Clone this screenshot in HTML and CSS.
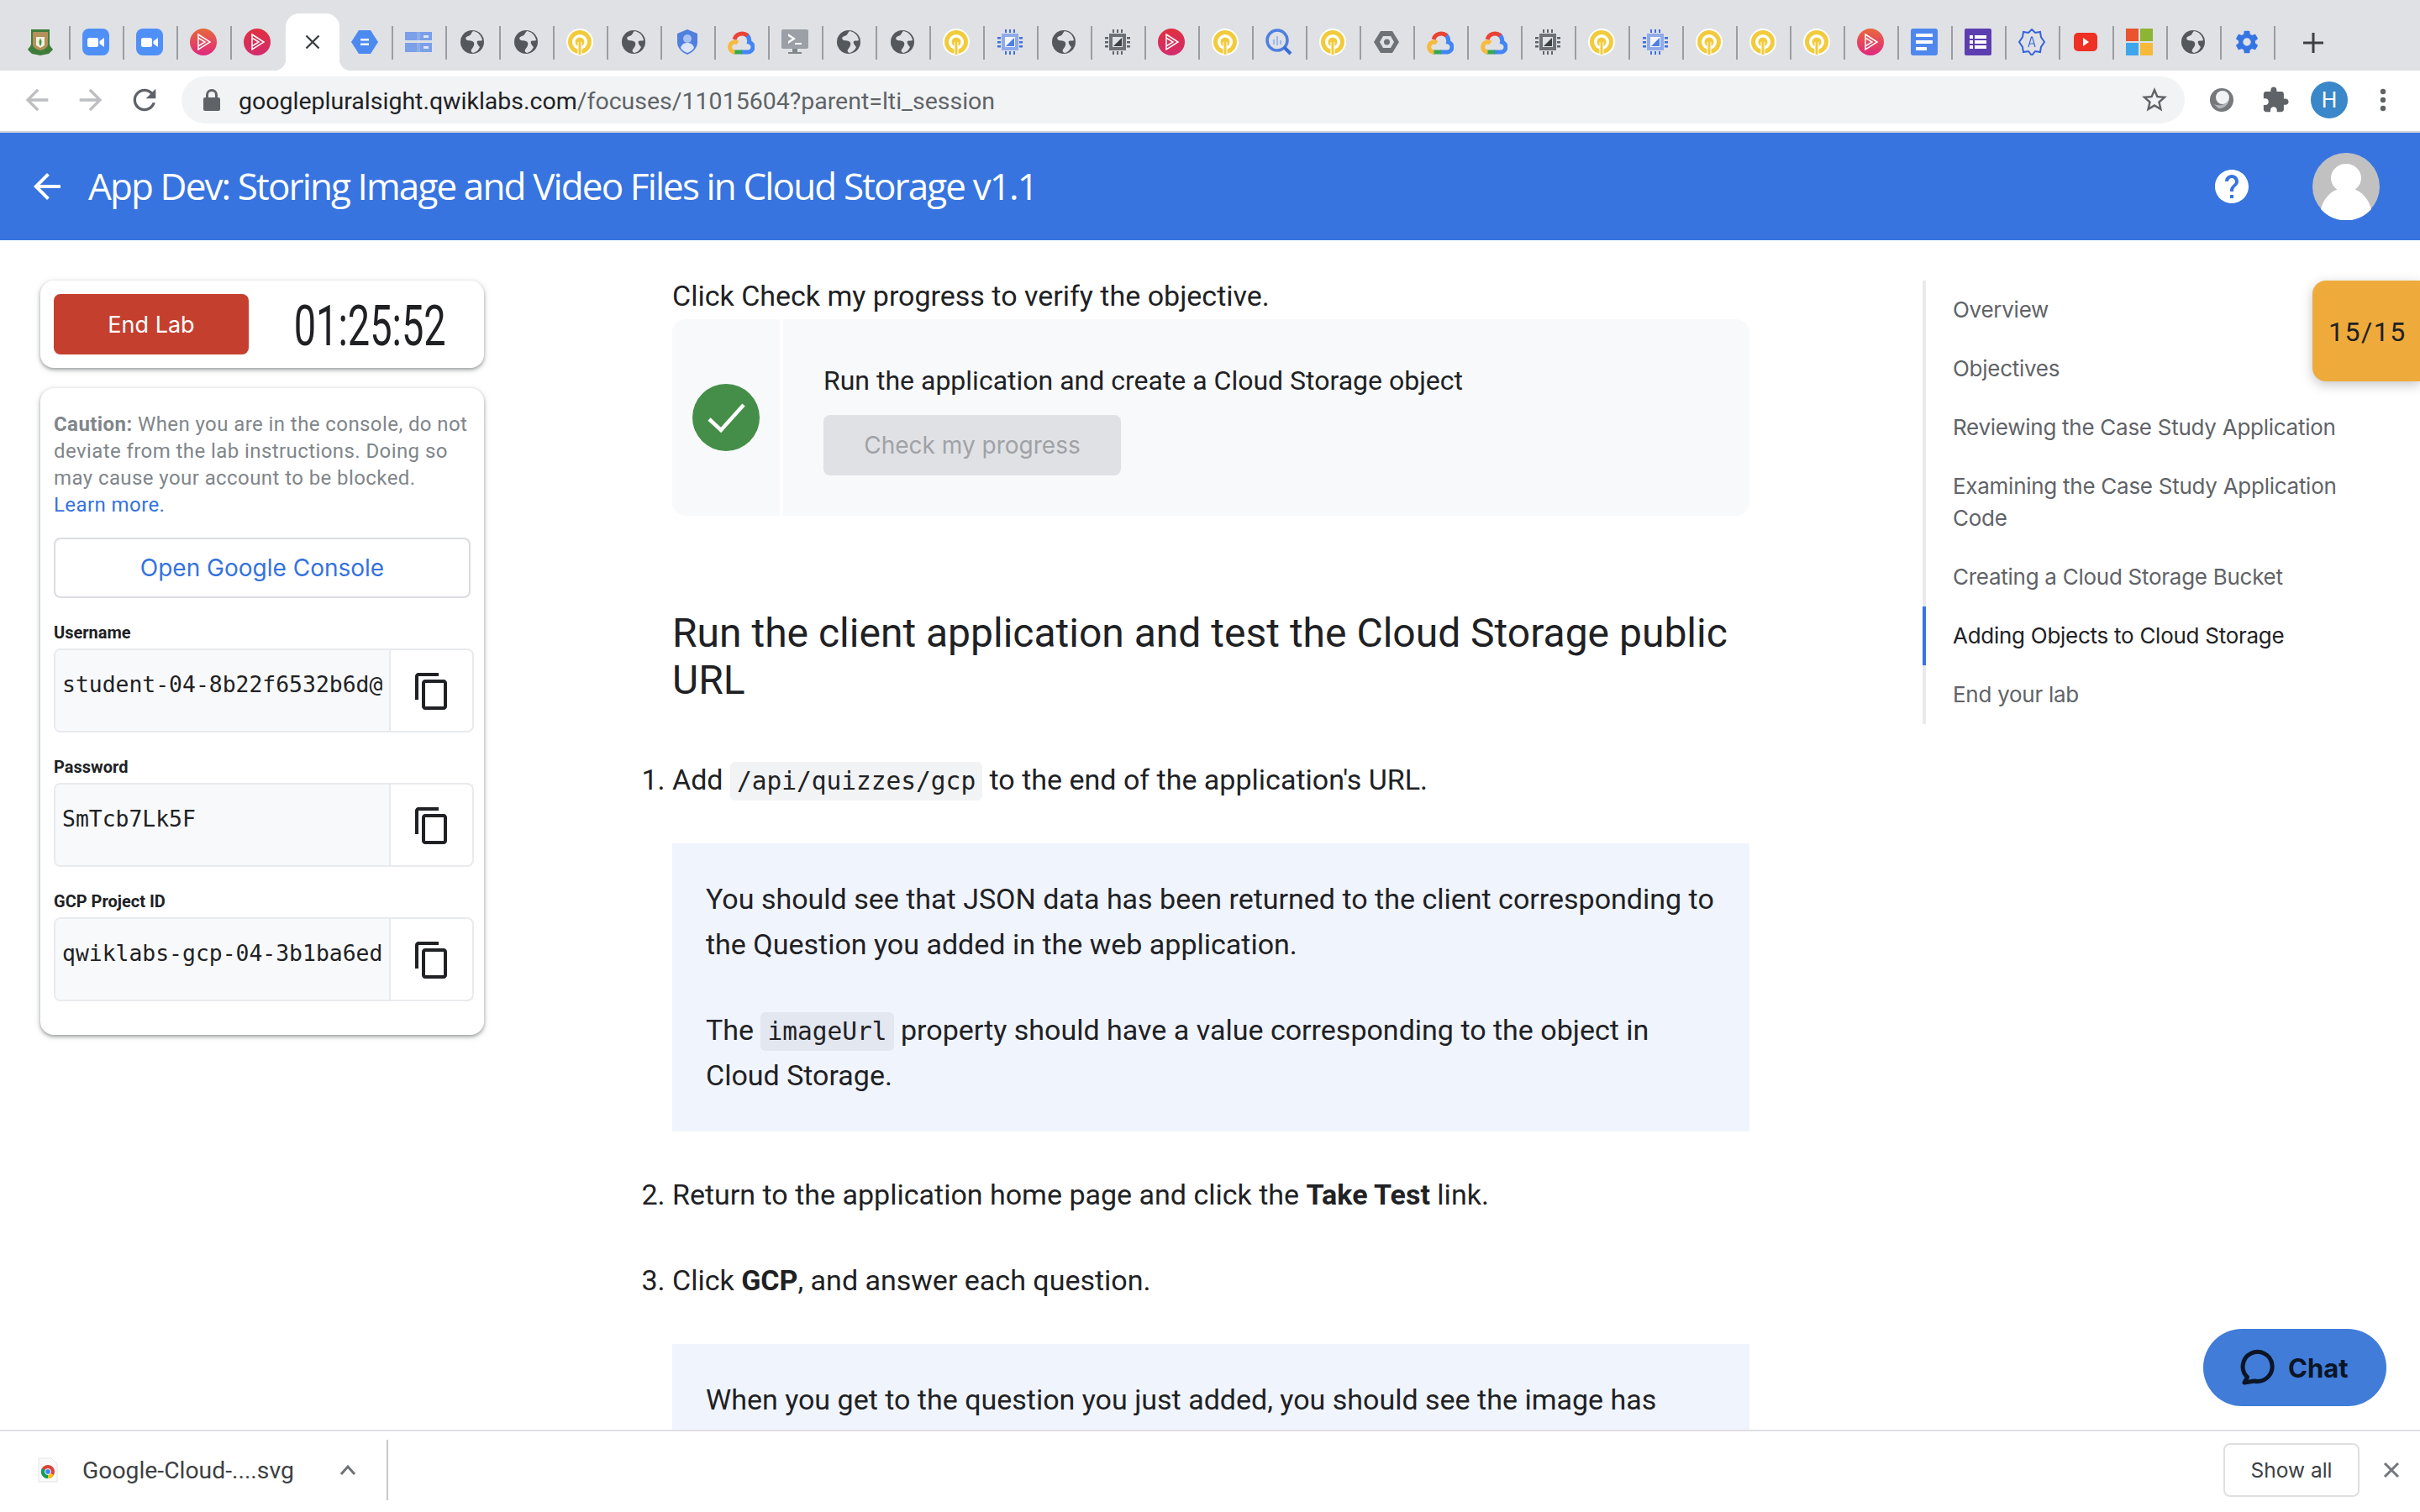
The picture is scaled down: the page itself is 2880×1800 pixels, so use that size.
FILE: index.html
```html
<!DOCTYPE html>
<html lang="en">

<head>
    <meta charset="UTF-8">
    <title>App Dev: Storing Image and Video Files in Cloud Storage v1.1</title>
    <link rel="stylesheet" href="styles.css">
</head>

<body>
    <svg class="sprites" width="0" height="0">
        <defs>
            <linearGradient id="psGrad" x1="0" y1="0" x2="0" y2="1">
                <stop offset="0" stop-color="#e8683a" />
                <stop offset="1" stop-color="#e0287f" />
            </linearGradient>
            <linearGradient id="psRed" x1="0" y1="0" x2="0" y2="1">
                <stop offset="0" stop-color="#e0303f" />
                <stop offset="1" stop-color="#d32c6e" />
            </linearGradient>
        </defs>
        <symbol id="crest" viewBox="0 0 32 32">
            <path d="M5 1h22v17c0 3 3 5 4 7l-5 5-10 2-10-2-5-5c1-2 4-4 4-7z" fill="#3d7d3a" />
            <path d="M7 4h18v15c0 3-4 6-9 7-5-1-9-4-9-7z" fill="#b3915a" />
            <path d="M11 10h10v10l-5 3-5-3z" fill="#f3efe0" />
            <path d="M16 12c2 2 2 6 0 9-2-3-2-7 0-9z" fill="#3f9a45" />
        </symbol>
        <symbol id="zoom" viewBox="0 0 32 32">
            <rect width="32" height="32" rx="8" fill="#4f90f8" />
            <rect x="6" y="11" width="13" height="11" rx="2.5" fill="#fff" />
            <path d="M20.5 15l5.5-4v11l-5.500-4z" fill="#fff" />
        </symbol>
        <symbol id="ps" viewBox="0 0 32 32">
            <circle cx="16" cy="16" r="16" fill="url(#psGrad)" />
            <path d="M10 7l14 9-14 9zM10 11v10l8-5z" fill="none" stroke="#fff" stroke-width="1.500" />
        </symbol>
        <symbol id="psred" viewBox="0 0 32 32">
            <circle cx="16" cy="16" r="16" fill="url(#psRed)" />
            <path d="M10 7l14 9-14 9zM10 11v10l8-5z" fill="none" stroke="#fff" stroke-width="1.500" />
        </symbol>
        <symbol id="hexblue" viewBox="0 0 32 32">
            <path d="M9 2h14l9 14-9 14H9L0 16z" fill="#4d8af0" />
            <path d="M11 12h10v2.500H11zM11 17.500h10V20H11z" fill="#fff" />
        </symbol>
        <symbol id="storage" viewBox="0 0 32 32">
            <path d="M0 4h14v10H0zM18 4h14v10H18zM0 17h14v11H0zM18 17h14v11H18z" fill="#7b9fe8" />
            <path d="M14 4h4v10h-4zM14 17h4v11h-4z" fill="#8fade9" />
            <path d="M22 8h6v3h-6zM22 21h6v3h-6z" fill="#dfe6f8" />
        </symbol>
        <symbol id="globe" viewBox="0 0 32 32">
            <circle cx="16" cy="16" r="14" fill="#54575c" />
            <path d="M17 3c-3 3-2 5-6 6-3 1-4 3-1 5 4 1 7 0 8 3 1 3-1 5-3 8-1 2 0 3 2 4 4-1 6-3 8-7-2-2-4-5-3-7 2-1 4 0 6-1-1-6-5-10-11-11z" fill="#dfe1e5" />
        </symbol>
        <symbol id="qwik" viewBox="0 0 32 32">
            <circle cx="16" cy="16" r="16" fill="#fff" />
            <circle cx="16" cy="16" r="14" fill="#f2cb3d" />
            <circle cx="16" cy="16" r="9" fill="#fff" />
            <circle cx="16" cy="16" r="5.500" fill="#f2cb3d" />
            <path d="M13.500 16h5v14h-5z" fill="#fff" />
            <path d="M14.500 16h3v15h-3z" fill="#f2cb3d" />
        </symbol>
        <symbol id="shield" viewBox="0 0 32 32">
            <path d="M16 1l12 5v10c0 7-5 12-12 15C9 28 4 23 4 16V6z" fill="#4f7fdf" />
            <circle cx="16" cy="12" r="5" fill="#a9c1f2" />
            <path d="M8 23c1-4 4-6 8-6s7 2 8 6c-2 3-5 5-8 6-3-1-6-3-8-6z" fill="#dbe4f8" />
        </symbol>
        <symbol id="gcloud" viewBox="0 0 32 32">
            <g fill="none" stroke-width="5">
                <path d="M16 28h8.500a6 6 0 0 0 1-11.800A9.500 9.500 0 0 0 22 7" stroke="#4285f4" />
                <path d="M23.500 8.500A9.500 9.500 0 0 0 8 13" stroke="#ea4335" />
                <path d="M7 28h10" stroke="#34a853" />
                <path d="M8.500 28A6 6 0 1 1 12 17" stroke="#f6bb3c" />
            </g>
        </symbol>
        <symbol id="console" viewBox="0 0 32 32">
            <rect y="1" width="32" height="23" rx="2" fill="#9aa0a6" />
            <path d="M8 6l9 6-9 6v-3l5-3-5-3zM16 17h8v2h-8z" fill="#fff" />
            <path d="M13 24h6v4h5v2H8v-2h5z" fill="#80868b" />
        </symbol>
        <symbol id="chipblue" viewBox="0 0 32 32">
            <path d="M10 1h2v4h-2zM15 1h2v4h-2zM20 1h2v4h-2zM10 27h2v4h-2zM15 27h2v4h-2zM20 27h2v4h-2zM1 10h4v2.500H1zM1 15h4v2.500H1zM1 20h4v2.500H1zM27 10h4v2.500h-4zM27 15h4v2.500h-4zM27 20h4v2.500h-4z" fill="#3f6fdd" />
            <rect x="6" y="6" width="20" height="20" fill="#8fabea" />
            <rect x="10" y="10" width="12" height="12" fill="#f2f5fc" />
            <path d="M11 21l10-10v10z" fill="#4f7fdf" />
        </symbol>
        <symbol id="chipgray" viewBox="0 0 32 32">
            <path d="M10 1h2v4h-2zM15 1h2v4h-2zM20 1h2v4h-2zM10 27h2v4h-2zM15 27h2v4h-2zM20 27h2v4h-2zM1 10h4v2.500H1zM1 15h4v2.500H1zM1 20h4v2.500H1zM27 10h4v2.500h-4zM27 15h4v2.500h-4zM27 20h4v2.500h-4z" fill="#5f6368" />
            <rect x="6" y="6" width="20" height="20" fill="#6e7277" />
            <rect x="10" y="10" width="12" height="12" fill="#dfe1e5" />
            <path d="M11 21l10-10v10z" fill="#3c4043" />
        </symbol>
        <symbol id="bq" viewBox="0 0 32 32">
            <circle cx="14" cy="14" r="12" fill="none" stroke="#4f7fdf" stroke-width="3.500" />
            <path d="M22 22l8 8" stroke="#3d6cd4" stroke-width="4" />
            <path d="M9 13h2v6H9zM13 9h2v11h-2zM17 14h2v5h-2z" fill="#9db6ec" />
        </symbol>
        <symbol id="hexgray" viewBox="0 0 32 32">
            <path d="M9 3h14l8 13-8 13H9L1 16z" fill="#6e7277" />
            <path d="M12 9l9 0 4 7-4 7H12l-4-7z" fill="#dfe1e5" />
            <circle cx="16.500" cy="16" r="3.500" fill="#6e7277" />
        </symbol>
        <symbol id="docs" viewBox="0 0 32 32">
            <rect width="32" height="32" rx="3" fill="#4f87ee" />
            <path d="M6 6h20v4H6zM6 14h20v4H6zM6 22h13v4H6z" fill="#fff" />
        </symbol>
        <symbol id="forms" viewBox="0 0 32 32">
            <rect width="32" height="32" rx="2" fill="#5c3eb0" />
            <path d="M6 8h4v4H6zM12 8h14v4H12zM6 14h4v4H6zM12 14h14v4H12zM6 20h4v4H6zM12 20h14v4H12z" fill="#fff" />
        </symbol>
        <symbol id="abadge" viewBox="0 0 32 32">
            <path d="M16 1l4 4 6-1 1 6 4 6-4 6-1 6-6-1-4 5-4-5-6 1-1-6-4-6 4-6 1-6 6 1z" fill="none" stroke="#3563dc" stroke-width="2" />
            <path d="M12 22l3.500-12h1L20 22m-6.500-4h5" fill="none" stroke="#3563dc" stroke-width="1.200" />
        </symbol>
        <symbol id="yt" viewBox="0 0 32 32">
            <rect x="2" y="5" width="28" height="22" rx="5" fill="#ee3124" />
            <path d="M13 11l7 5-7 5z" fill="#fff" />
        </symbol>
        <symbol id="ms" viewBox="0 0 32 32">
            <path d="M0 0h15v15H0z" fill="#e8552f" />
            <path d="M17 0h15v15H17z" fill="#8db534" />
            <path d="M0 17h15v15H0z" fill="#3fa6ec" />
            <path d="M17 17h15v15H17z" fill="#f6b93a" />
        </symbol>
        <symbol id="gear" viewBox="0 0 24 24">
            <path d="M19.400 13c.04-.32.07-.66.07-1s-.03-.68-.07-1l2.110-1.650c.19-.15.24-.42.12-.64l-2-3.460c-.12-.22-.39-.3-.61-.22l-2.490 1c-.52-.4-1.080-.73-1.690-.98l-.38-2.650A.49.49 0 0 0 14 2h-4c-.25 0-.46.18-.49.420l-.38 2.650c-.61.25-1.170.59-1.690.98l-2.490-1c-.23-.09-.49 0-.61.220l-2 3.460c-.13.220-.07.490.12.640L4.570 11c-.04.320-.07.670-.07 1s.03.680.07 1l-2.110 1.650c-.19.150-.24.420-.12.640l2 3.460c.12.220.39.300.61.220l2.490-1c.52.400 1.080.730 1.690.980l.38 2.650c.03.240.24.420.49.420h4c.25 0 .46-.18.49-.42l.38-2.650c.61-.25 1.170-.59 1.690-.98l2.490 1c.23.090.49 0 .61-.22l2-3.460c.12-.22.070-.49-.12-.64L19.400 13zM12 15.500a3.500 3.500 0 1 1 0-7 3.500 3.500 0 0 1 0 7z" fill="#3574e3" />
        </symbol>
        <symbol id="copy" viewBox="0 0 24 24">
            <path d="M16 1H4c-1.100 0-2 .9-2 2v14h2V3h12V1zm3 4H8c-1.100 0-2 .9-2 2v14c0 1.100.9 2 2 2h11c1.100 0 2-.9 2-2V7c0-1.100-.9-2-2-2zm0 16H8V7h11v14z" />
        </symbol>
        <symbol id="arrow" viewBox="0 0 24 24">
            <path d="M20 11H7.830l5.590-5.590L12 4l-8 8 8 8 1.410-1.410L7.830 13H20v-2z" />
        </symbol>
    </svg>

    <div class="tabs">
        <div class="tab"><svg class="fav"><use href="#crest" /></svg></div>
        <div class="tab"><svg class="fav"><use href="#zoom" /></svg></div>
        <div class="tab"><svg class="fav"><use href="#zoom" /></svg></div>
        <div class="tab"><svg class="fav"><use href="#ps" /></svg></div>
        <div class="tab tab-before"><svg class="fav"><use href="#psred" /></svg></div>
        <div class="tab tab-active">
            <svg width="18" height="18" viewBox="0 0 18 18"><path d="M1.500 1.500l15 15M16.500 1.500l-15 15" stroke="#3c4043" stroke-width="2.400" /></svg>
        </div>
        <div class="tab"><svg class="fav"><use href="#hexblue" /></svg></div>
        <div class="tab"><svg class="fav"><use href="#storage" /></svg></div>
        <div class="tab"><svg class="fav"><use href="#globe" /></svg></div>
        <div class="tab"><svg class="fav"><use href="#globe" /></svg></div>
        <div class="tab"><svg class="fav"><use href="#qwik" /></svg></div>
        <div class="tab"><svg class="fav"><use href="#globe" /></svg></div>
        <div class="tab"><svg class="fav"><use href="#shield" /></svg></div>
        <div class="tab"><svg class="fav"><use href="#gcloud" /></svg></div>
        <div class="tab"><svg class="fav"><use href="#console" /></svg></div>
        <div class="tab"><svg class="fav"><use href="#globe" /></svg></div>
        <div class="tab"><svg class="fav"><use href="#globe" /></svg></div>
        <div class="tab"><svg class="fav"><use href="#qwik" /></svg></div>
        <div class="tab"><svg class="fav"><use href="#chipblue" /></svg></div>
        <div class="tab"><svg class="fav"><use href="#globe" /></svg></div>
        <div class="tab"><svg class="fav"><use href="#chipgray" /></svg></div>
        <div class="tab"><svg class="fav"><use href="#psred" /></svg></div>
        <div class="tab"><svg class="fav"><use href="#qwik" /></svg></div>
        <div class="tab"><svg class="fav"><use href="#bq" /></svg></div>
        <div class="tab"><svg class="fav"><use href="#qwik" /></svg></div>
        <div class="tab"><svg class="fav"><use href="#hexgray" /></svg></div>
        <div class="tab"><svg class="fav"><use href="#gcloud" /></svg></div>
        <div class="tab"><svg class="fav"><use href="#gcloud" /></svg></div>
        <div class="tab"><svg class="fav"><use href="#chipgray" /></svg></div>
        <div class="tab"><svg class="fav"><use href="#qwik" /></svg></div>
        <div class="tab"><svg class="fav"><use href="#chipblue" /></svg></div>
        <div class="tab"><svg class="fav"><use href="#qwik" /></svg></div>
        <div class="tab"><svg class="fav"><use href="#qwik" /></svg></div>
        <div class="tab"><svg class="fav"><use href="#qwik" /></svg></div>
        <div class="tab"><svg class="fav"><use href="#ps" /></svg></div>
        <div class="tab"><svg class="fav"><use href="#docs" /></svg></div>
        <div class="tab"><svg class="fav"><use href="#forms" /></svg></div>
        <div class="tab"><svg class="fav"><use href="#abadge" /></svg></div>
        <div class="tab"><svg class="fav"><use href="#yt" /></svg></div>
        <div class="tab"><svg class="fav"><use href="#ms" /></svg></div>
        <div class="tab"><svg class="fav"><use href="#globe" /></svg></div>
        <div class="tab"><svg class="fav"><use href="#gear" /></svg></div>
        <div class="tab-new">
            <svg width="28" height="28" viewBox="0 0 28 28"><path d="M12.500 2h3v10.500H26v3H15.500V26h-3V15.500H2v-3h10.500z" /></svg>
        </div>
    </div>

    <div class="toolbar">
        <div class="tool tool-off"><svg class="icon-40"><use href="#arrow" /></svg></div>
        <div class="tool tool-off tool-flip"><svg class="icon-40"><use href="#arrow" /></svg></div>
        <div class="tool">
            <svg width="40" height="40" viewBox="0 0 24 24"><path d="M17.650 6.350C16.200 4.900 14.210 4 12 4c-4.420 0-7.990 3.580-7.990 8s3.570 8 7.990 8c3.730 0 6.840-2.550 7.730-6h-2.080c-.82 2.330-3.040 4-5.650 4-3.310 0-6-2.690-6-6s2.690-6 6-6c1.660 0 3.140.69 4.220 1.780L13 11h7V4l-2.350 2.350z" /></svg>
        </div>
        <div class="omnibox">
            <svg class="lock" width="20" height="26" viewBox="0 0 20 26"><path d="M3 10V7a7 7 0 0 1 14 0v3h1a2 2 0 0 1 2 2v12a2 2 0 0 1-2 2H2a2 2 0 0 1-2-2V12a2 2 0 0 1 2-2zm3 0h8V7a4 4 0 0 0-8 0z" /></svg>
            <span class="url"><span class="url-host">googlepluralsight.qwiklabs.com</span>/focuses/11015604?parent=lti_session</span>
            <svg class="star" width="36" height="36" viewBox="0 0 24 24"><path d="M22 9.240l-7.190-.62L12 2 9.190 8.630 2 9.240l5.460 4.730L5.820 21 12 17.270 18.180 21l-1.630-7.030L22 9.240zM12 15.400l-3.760 2.270 1-4.280-3.320-2.880 4.380-.38L12 6.100l1.710 4.040 4.380.38-3.320 2.880 1 4.280L12 15.400z" /></svg>
        </div>
        <div class="toolbar-right">
            <div class="tool">
                <svg width="32" height="32" viewBox="0 0 32 32"><circle cx="16" cy="16" r="14" fill="#76787c" /><circle cx="17" cy="13" r="8" fill="#f1f3f4" /><path d="M7 21c6 3 14 1 18-6-1 7-7 12-13 11z" fill="#b4b6b9" /></svg>
            </div>
            <div class="tool">
                <svg width="34" height="34" viewBox="0 0 24 24"><path d="M20.500 11H19V7c0-1.100-.9-2-2-2h-4V3.500C13 2.120 11.880 1 10.500 1S8 2.120 8 3.500V5H4c-1.100 0-1.990.9-1.990 2v3.800H3.500c1.490 0 2.700 1.210 2.700 2.700s-1.210 2.700-2.700 2.700H2V20c0 1.100.9 2 2 2h3.800v-1.500c0-1.490 1.210-2.700 2.700-2.700 1.490 0 2.700 1.210 2.700 2.700V22H17c1.100 0 2-.9 2-2v-4h1.500c1.380 0 2.500-1.120 2.500-2.500S21.880 11 20.500 11z" /></svg>
            </div>
            <div class="tool"><span class="profile">H</span></div>
            <div class="tool">
                <svg width="8" height="32" viewBox="0 0 8 32"><circle cx="4" cy="6" r="3.200" /><circle cx="4" cy="16" r="3.200" /><circle cx="4" cy="26" r="3.200" /></svg>
            </div>
        </div>
    </div>

    <header class="lab-header">
        <svg class="header-back"><use href="#arrow" /></svg>
        <h1 class="lab-title">App Dev: Storing Image and Video Files in Cloud Storage v1.1</h1>
        <svg class="header-help" width="48" height="48" viewBox="0 0 24 24"><path d="M12 2C6.480 2 2 6.480 2 12s4.480 10 10 10 10-4.480 10-10S17.520 2 12 2zm1 17h-2v-2h2v2zm2.070-7.750l-.9.920C13.450 12.900 13 13.500 13 15h-2v-.5c0-1.100.45-2.100 1.170-2.830l1.240-1.260c.37-.36.59-.86.59-1.410 0-1.100-.9-2-2-2s-2 .9-2 2H8c0-2.210 1.790-4 4-4s4 1.790 4 4c0 .88-.36 1.680-.93 2.250z" /></svg>
        <svg class="header-user" width="80" height="80" viewBox="0 0 80 80">
            <circle cx="40" cy="40" r="40" fill="#c1c1c1" />
            <ellipse cx="40" cy="30" rx="18" ry="17" fill="#fff" />
            <path d="M10 67c3-12 11-21 21-24 5 3 13 3 18 0 10 3 18 12 21 24a40 40 0 0 1-60 0z" fill="#fff" />
        </svg>
    </header>

    <div class="workspace">
        <aside class="side">
            <div class="card card-timer">
                <button class="btn-end">End Lab</button>
                <div class="timer"><span class="timer-digits">01:25:52</span></div>
            </div>

            <div class="card card-creds">
                <p class="caution"><b>Caution:</b> When you are in the console, do not deviate from the lab instructions. Doing so may cause your account to be blocked. <a href="#">Learn more.</a></p>
                <button class="btn-console">Open Google Console</button>

                <label class="field-label">Username</label>
                <div class="field">
                    <div class="field-value">student-04-8b22f6532b6d@</div>
                    <div class="field-copy"><svg class="icon-copy"><use href="#copy" /></svg></div>
                </div>

                <label class="field-label">Password</label>
                <div class="field">
                    <div class="field-value">SmTcb7Lk5F</div>
                    <div class="field-copy"><svg class="icon-copy"><use href="#copy" /></svg></div>
                </div>

                <label class="field-label">GCP Project ID</label>
                <div class="field">
                    <div class="field-value">qwiklabs-gcp-04-3b1ba6ed</div>
                    <div class="field-copy"><svg class="icon-copy"><use href="#copy" /></svg></div>
                </div>
            </div>
        </aside>

        <main class="content">
            <p class="intro">Click Check my progress to verify the objective.</p>

            <div class="progress">
                <div class="progress-mark">
                    <svg width="80" height="80" viewBox="0 0 80 80"><circle cx="40" cy="40" r="40" fill="#458e49" /><path d="M20 42l14 13 27-30" fill="none" stroke="#fff" stroke-width="4.500" /></svg>
                </div>
                <div class="progress-body">
                    <p>Run the application and create a Cloud Storage object</p>
                    <button class="btn-check">Check my progress</button>
                </div>
            </div>

            <h2>Run the client application and test the Cloud Storage public URL</h2>

            <ol class="steps">
                <li>
                    Add <code>/api/quizzes/gcp</code> to the end of the application's URL.
                    <div class="note">
                        <p>You should see that JSON data has been returned to the client corresponding to the Question you added in the web application.</p>
                        <p>The <code>imageUrl</code> property should have a value corresponding to the object in Cloud Storage.</p>
                    </div>
                </li>
                <li>Return to the application home page and click the <b>Take Test</b> link.</li>
                <li>
                    Click <b>GCP</b>, and answer each question.
                    <div class="note">
                        <p>When you get to the question you just added, you should see the image has</p>
                    </div>
                </li>
            </ol>
        </main>

        <nav class="toc">
            <a href="#">Overview</a>
            <a href="#">Objectives</a>
            <a href="#">Reviewing the Case Study Application</a>
            <a href="#">Examining the Case Study Application Code</a>
            <a href="#">Creating a Cloud Storage Bucket</a>
            <a href="#" class="toc-active">Adding Objects to Cloud Storage</a>
            <a href="#">End your lab</a>
        </nav>

        <div class="score">15/15</div>

        <button class="chat">
            <svg width="42" height="44" viewBox="0 0 42 44"><path d="M5 40l3.500-6.500A17.500 17.500 0 1 1 17 38z" fill="none" stroke="#0b1526" stroke-width="5" stroke-linejoin="round" /></svg>
            Chat
        </button>
    </div>

    <footer class="downloads">
        <div class="download-item">
            <svg width="24" height="30" viewBox="0 0 24 30">
                <path d="M1 1h15l7 7v21H1z" fill="#fafafa" stroke="#e4e4e4" />
                <circle cx="12" cy="17" r="8" fill="#db4437" />
                <path d="M12 17l7 4a8 8 0 0 1-7 4z" fill="#f4c20d" />
                <path d="M12 17v8a8 8 0 0 1-7-12z" fill="#0f9d58" />
                <circle cx="12" cy="17" r="3.500" fill="#4285f4" stroke="#fff" />
            </svg>
            <span class="download-name">Google-Cloud-....svg</span>
            <svg class="download-caret" width="20" height="14" viewBox="0 0 20 14"><path d="M2 12l8-9 8 9" fill="none" stroke="#6f7276" stroke-width="3" /></svg>
        </div>
        <button class="btn-showall">Show all</button>
        <svg class="download-close" width="20" height="20" viewBox="0 0 20 20"><path d="M2 2l16 16M18 2L2 18" stroke="#73777b" stroke-width="3" /></svg>
    </footer>
</body>

</html>
```

FILE: styles.css
```css
* {
    box-sizing: border-box;
}

html,
body {
    margin: 0;
    height: 100%;
}

body {
    display: flex;
    flex-direction: column;
    height: 1800px;
    overflow: hidden;
    font-family: Roboto, sans-serif;
    color: #202124;
    background-color: #fff;
}

button {
    font-family: inherit;
    cursor: pointer;
}

.sprites {
    position: absolute;
}

/* browser tabs */
.tabs {
    display: flex;
    height: 84px;
    flex-shrink: 0;
    padding: 31px 0 13px 20px;
    background-color: #dfe1e5;
}

.tab {
    display: flex;
    justify-content: center;
    align-items: center;
    width: 64px;
    height: 40px;
    padding-right: 2px;
    border-right: 2px solid #9a9da1;
}

.tab:first-child .fav {
    margin-right: 4px;
}

.tab-before {
    border-right-color: transparent;
}

.tab-active {
    position: relative;
    height: 68px;
    margin-top: -15px;
    border-right: none;
    padding-right: 0;
    background-color: #fff;
    border-radius: 16px 16px 0 0;
}

.tab-active::before,
.tab-active::after {
    content: "";
    position: absolute;
    bottom: 0;
    width: 14px;
    height: 14px;
}

.tab-active::before {
    left: -14px;
    background: radial-gradient(circle at 0 0, #dfe1e5 14px, #fff 14.500px);
}

.tab-active::after {
    right: -14px;
    background: radial-gradient(circle at 100% 0, #dfe1e5 14px, #fff 14.500px);
}

.fav {
    width: 32px;
    height: 32px;
    margin-bottom: 2px;
}

.tab-new {
    display: flex;
    justify-content: center;
    align-items: center;
    width: 90px;
    height: 40px;
}

.tab-new svg {
    fill: #3c4043;
}

/* address bar */
.toolbar {
    display: flex;
    align-items: center;
    height: 74px;
    flex-shrink: 0;
    padding: 0 12px 2px;
    background-color: #fff;
    border-bottom: 2px solid #d5d7dc;
}

.tool {
    display: flex;
    justify-content: center;
    align-items: center;
    width: 64px;
    fill: #5f6368;
}

.tool-off {
    fill: #bcbec1;
}

.tool-flip svg {
    transform: scaleX(-1);
}

.icon-40 {
    width: 40px;
    height: 40px;
}

.omnibox {
    display: flex;
    align-items: center;
    flex: 1;
    height: 56px;
    margin: 0 12px;
    padding: 0 18px 0 26px;
    background-color: #f1f3f4;
    border-radius: 28px;
}

.lock {
    fill: #5f6368;
    margin-right: 22px;
}

.url {
    flex: 1;
    padding-top: 2px;
    font-family: Roboto, sans-serif;
    font-size: 28.500px;
    color: #5f6368;
}

.url-host {
    color: #202124;
}

.star {
    fill: #5f6368;
}

.toolbar-right {
    display: flex;
    align-items: center;
}

.profile {
    display: flex;
    justify-content: center;
    align-items: center;
    width: 44px;
    height: 44px;
    border-radius: 50%;
    background-color: #3a87c9;
    color: #fff;
    font-size: 26px;
}

/* blue lab header */
.lab-header {
    display: flex;
    align-items: center;
    height: 128px;
    flex-shrink: 0;
    padding: 0 48px 0 32px;
    background-color: #3774e0;
    color: #fff;
}

.header-back {
    width: 48px;
    height: 48px;
    fill: #fff;
}

.lab-title {
    flex: 1;
    margin: 0 0 2px 25px;
    font-family: "Open Sans", sans-serif;
    font-size: 44px;
    font-weight: 400;
    letter-spacing: -1.870px;
}

.header-help {
    fill: #fff;
    margin-right: 72px;
}

/* page body */
.workspace {
    position: relative;
    display: flex;
    flex: 1;
    min-height: 0;
    overflow: hidden;
    padding: 48px 0 0 48px;
}

.side {
    width: 528px;
    flex-shrink: 0;
}

.card {
    background-color: #fff;
    border-radius: 16px;
    box-shadow: 0 2px 4px rgba(60, 64, 67, 0.45), 0 2px 8px rgba(60, 64, 67, 0.15);
}

.card-timer {
    display: flex;
    align-items: center;
    height: 104px;
    padding: 0 16px;
}

.btn-end {
    width: 232px;
    height: 72px;
    flex-shrink: 0;
    border: none;
    border-radius: 8px;
    background-color: #c53f2f;
    color: #fff;
    font-family: Inter, sans-serif;
    font-size: 27px;
}

.timer {
    flex: 1;
    min-width: 0;
    display: flex;
    justify-content: center;
}

.timer-digits {
    display: block;
    flex-shrink: 0;
    padding-top: 4px;
    margin-left: 24px;
    font-size: 67px;
    line-height: 72px;
    transform: scaleX(0.7);
}

.card-creds {
    height: 770px;
    margin-top: 24px;
    padding: 27px 12px 0 16px;
}

.caution {
    margin: 0 0 23px;
    width: 496px;
    font-size: 24px;
    line-height: 32px;
    letter-spacing: 0.420px;
    color: #80868b;
}

.caution a {
    color: #3572de;
    text-decoration: none;
}

.btn-console {
    display: block;
    width: 496px;
    height: 72px;
    margin-bottom: 27px;
    background-color: #fff;
    border: 2px solid #dadce0;
    border-radius: 8px;
    color: #3572de;
    font-family: Inter, sans-serif;
    font-size: 28px;
}

.field-label {
    display: block;
    height: 33px;
    font-size: 20px;
    line-height: 28px;
    font-weight: 700;
    color: #202124;
}

.field {
    display: flex;
    height: 100px;
    margin-bottom: 27px;
    border: 2px solid #e8eaed;
    border-radius: 8px;
}

.field-value {
    width: 399px;
    flex-shrink: 0;
    padding: 21px 8px;
    overflow: hidden;
    white-space: nowrap;
    background-color: #f8f9fa;
    border-right: 2px solid #e8eaed;
    border-radius: 6px 0 0 6px;
    font-family: "DejaVu Sans Mono", monospace;
    font-size: 26.400px;
    line-height: 40px;
}

.field-copy {
    flex: 1;
    display: flex;
    justify-content: center;
    padding-top: 25px;
}

.icon-copy {
    width: 48px;
    height: 48px;
    fill: #202124;
}

/* lab text */
.content {
    width: 1282px;
    flex-shrink: 0;
    margin-left: 224px;
    font-size: 34px;
    line-height: 54px;
}

.intro {
    margin: -6px 0 0;
    height: 52px;
    line-height: 48px;
}

.progress {
    display: flex;
    height: 234px;
    background-color: #f8f9fa;
    border-radius: 16px;
}

.progress-mark {
    display: flex;
    justify-content: center;
    align-items: center;
    width: 132px;
    border-right: 4px solid #fff;
}

.progress-body {
    padding: 46px 0 0 48px;
}

.progress-body p {
    margin: 0 0 14px;
    font-size: 32px;
    line-height: 54px;
}

.btn-check {
    display: block;
    width: 354px;
    height: 72px;
    border: none;
    border-radius: 8px;
    background-color: #e0e1e4;
    color: #a0a2a6;
    font-family: Inter, sans-serif;
    font-size: 28px;
}

.content h2 {
    margin: 112px 0 0;
    font-size: 48px;
    font-weight: 400;
    line-height: 56px;
}

.steps {
    margin: 63px 0 0;
    padding: 0;
}

.steps li {
    margin-bottom: 48px;
}

code {
    padding: 6px 8px;
    border-radius: 6px;
    background-color: #f1f3f4;
    font-family: "DejaVu Sans Mono", monospace;
    font-size: 29.500px;
    line-height: 1;
}

.note {
    margin-top: 49px;
    padding: 39px 40px 40px;
    background-color: #f0f4fd;
}

.note p {
    margin: 0 0 48px;
}

.note p:last-child {
    margin-bottom: 0;
}

.note code {
    background-color: #e3e7f0;
}

/* right outline */
.toc {
    width: 500px;
    flex-shrink: 0;
    align-self: flex-start;
    margin-left: 206px;
    border-left: 4px solid #e8eaed;
}

.toc a {
    display: block;
    margin-left: -4px;
    padding: 16px 0 16px 32px;
    border-left: 4px solid transparent;
    font-family: Inter, sans-serif;
    font-size: 26px;
    line-height: 38px;
    letter-spacing: -0.270px;
    color: #5f6368;
    text-decoration: none;
}

.toc .toc-active {
    border-left-color: #3774e0;
    color: #202124;
}

.score {
    position: absolute;
    top: 48px;
    right: 0;
    width: 128px;
    height: 120px;
    padding: 0 0 0 19px;
    background-color: #eeab3c;
    border-radius: 16px 0 0 16px;
    box-shadow: 0 4px 14px rgba(60, 64, 67, 0.3);
    font-size: 32px;
    line-height: 122px;
    letter-spacing: 1.500px;
}

.chat {
    position: absolute;
    left: 2622px;
    bottom: 28px;
    display: flex;
    align-items: center;
    gap: 15px;
    width: 218px;
    height: 92px;
    padding: 0 0 0 44px;
    border: none;
    border-radius: 46px;
    background-color: #407cd8;
    color: #0b1526;
    font-family: Inter, sans-serif;
    font-size: 31px;
    font-weight: 700;
}

/* download shelf */
.downloads {
    display: flex;
    align-items: center;
    height: 98px;
    flex-shrink: 0;
    padding: 0 24px 4px 45px;
    background-color: #fff;
    border-top: 2px solid #dfdfe5;
}

.download-item {
    display: flex;
    align-items: center;
    flex: 1;
    height: 72px;
}

.download-name {
    width: 306px;
    margin-left: 29px;
    font-family: Roboto, sans-serif;
    font-size: 28.300px;
    color: #3c4043;
}

.download-caret {
    margin-right: 36px;
}

.download-item::after {
    content: "";
    width: 2px;
    height: 72px;
    background-color: #c8c8c8;
}

.btn-showall {
    width: 162px;
    height: 64px;
    background-color: #fff;
    border: 2px solid #dfdfe1;
    border-radius: 8px;
    color: #3c4043;
    font-family: Inter, sans-serif;
    font-size: 24.500px;
}

.download-close {
    margin-left: 28px;
}
```
